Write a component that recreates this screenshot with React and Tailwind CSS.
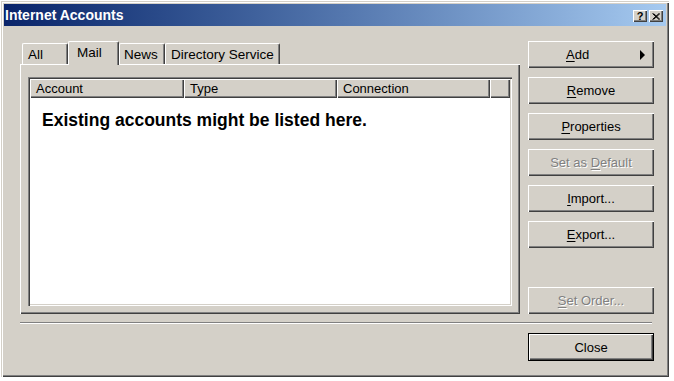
import React from 'react';

const raised =
  'shadow-[inset_1px_1px_#ffffff,inset_-1px_-1px_#404040,inset_-2px_-2px_#808080]';

const U = ({ children }) => <span className="underline underline-offset-[2px]">{children}</span>;

const Button = ({ children, disabled, className = '' }) => (
  <button
    type="button"
    className={`w-[126px] h-[27px] bg-[#d4d0c8] text-[13px] flex items-center justify-center pt-[1px] ${raised} ${
      disabled ? 'text-[#808080] [text-shadow:1px_1px_0_#ffffff]' : 'text-black'
    } ${className}`}
  >
    {children}
  </button>
);

const Tab = ({ label, width, pad, selected }) => (
  <div
    className={`${width} ${pad} bg-[#d4d0c8] text-[13.5px] leading-[15px] text-black border-l border-t border-white rounded-tl-[2px] rounded-tr-[2px] shadow-[inset_-1px_0_#808080] ${
      selected ? 'h-[24px] -mb-px relative z-10 pt-[3px] border-r border-r-[#404040]' : 'h-[21px] pt-[3px] border-r border-r-[#404040]'
    }`}
  >
    {label}
  </div>
);

const columns = [
  { name: 'Account', w: 'w-[154px]' },
  { name: 'Type', w: 'w-[153px]' },
  { name: 'Connection', w: 'w-[153px]' },
];

export default function App() {
  return (
    <div className="w-[674px] h-[381px] bg-white pt-px pl-px font-['Liberation_Sans',Arial,sans-serif]">
      <div className="w-[668px] h-[376px] bg-[#d4d0c8] p-[3px] flex flex-col shadow-[inset_1px_1px_#d4d0c8,inset_2px_2px_#ffffff,inset_-1px_-1px_#404040,inset_-2px_-2px_#808080]">
        {/* title bar */}
        <div className="h-[22px] flex items-center bg-gradient-to-r from-[#0a246a] to-[#a6caf0] pl-px pr-[3px]">
          <span className="text-white font-bold text-[14px] leading-none">Internet Accounts</span>
          <div className="ml-auto flex gap-[2px] mt-[2px]">
            <div className={`w-[14px] h-[12px] bg-[#d4d0c8] flex items-center justify-center text-[11px] font-bold leading-none text-black ${raised}`}>
              ?
            </div>
            <div className={`w-[14px] h-[12px] bg-[#d4d0c8] flex items-center justify-center ${raised}`}>
              <svg width="8" height="7" viewBox="0 0 8 7">
                <path d="M0.5 0.5 L7 6.5 M1.5 0.5 L8 6.5 M7 0.5 L0.5 6.5 M8 0.5 L1.5 6.5" stroke="#000" strokeWidth="1" />
              </svg>
            </div>
          </div>
        </div>

        {/* body */}
        <div className="pl-[16px] pt-[14px]">
          <div className="flex gap-[8px] items-start">
            {/* left: tabs and sheet */}
            <div className="w-[500px] flex flex-col">
              <div className="h-[24px] flex items-end pl-[2px]">
                <Tab label="All" width="w-[46px]" pad="pl-[5px]" />
                <Tab label="Mail" width="w-[51px]" pad="pl-[8px]" selected />
                <Tab label="News" width="w-[46px]" pad="pl-[4px]" />
                <Tab label="Directory Service" width="w-[115px]" pad="pl-[5px]" />
              </div>
              <div className="h-[250px] border-l border-t border-white shadow-[inset_-1px_-1px_#404040,inset_-2px_-2px_#808080] pl-[7px] pt-[12px]">
                <div className="w-[484px] h-[229px] bg-white p-[2px] shadow-[inset_1px_1px_#808080,inset_2px_2px_#404040,inset_-1px_-1px_#ffffff,inset_-2px_-2px_#d4d0c8] flex flex-col">
                  <div className="h-[19px] flex">
                    {columns.map((c) => (
                      <div
                        key={c.name}
                        className={`${c.w} h-full bg-[#d4d0c8] text-[13px] leading-[15px] pl-[6px] pt-[2px] text-black ${raised}`}
                      >
                        {c.name}
                      </div>
                    ))}
                    <div className={`flex-1 h-full bg-[#d4d0c8] ${raised}`} />
                  </div>
                  <p className="pl-[12px] pt-[14px] text-[17.5px] leading-none font-bold text-black">
                    Existing accounts might be listed here.
                  </p>
                </div>
              </div>
            </div>

            {/* right: buttons */}
            <div className="w-[126px] h-[274px] pt-px flex flex-col gap-[9px]">
              <button
                type="button"
                className={`w-[126px] h-[27px] bg-[#d4d0c8] text-[13px] text-black flex items-center pl-[38px] pr-[9px] pt-[1px] ${raised}`}
              >
                <span>
                  <U>A</U>dd
                </span>
                <span className="ml-auto w-0 h-0 border-y-[5px] border-y-transparent border-l-[5px] border-l-black" />
              </button>
              <Button>
                <span><U>R</U>emove</span>
              </Button>
              <Button>
                <span><U>P</U>roperties</span>
              </Button>
              <Button disabled>
                <span>Set as <U>D</U>efault</span>
              </Button>
              <Button>
                <span><U>I</U>mport...</span>
              </Button>
              <Button>
                <span><U>E</U>xport...</span>
              </Button>
              <Button disabled className="mt-auto">
                <span><U>S</U>et Order...</span>
              </Button>
            </div>
          </div>

          <div className="w-[632px] h-[2px] mt-[8px] border-t border-[#808080] border-b border-b-white" />

          <div className="w-[634px] flex justify-end mt-[9px]">
            <button
              type="button"
              className="w-[126px] h-[28px] border border-black bg-[#d4d0c8] text-[13px] text-black flex items-center justify-center pt-[1px] shadow-[inset_1px_1px_#ffffff,inset_-1px_-1px_#404040,inset_-2px_-2px_#808080]"
            >
              Close
            </button>
          </div>
        </div>
      </div>
    </div>
  );
}
